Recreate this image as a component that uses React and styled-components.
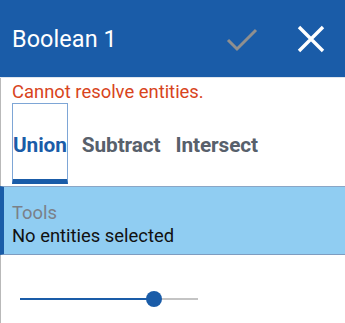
import React from 'react';
import styled, { createGlobalStyle } from 'styled-components';

const GlobalStyle = createGlobalStyle`
  html, body {
    margin: 0;
    padding: 0;
    background: #fff;
  }
  body {
    font-family: Roboto, 'Noto Sans', sans-serif;
  }
`;

const tabs = ['Union', 'Subtract', 'Intersect'];

function App() {
  return (
    <>
      <GlobalStyle />
      <Panel>
        <Header>
          <Title>Boolean 1</Title>
          <HeaderButton aria-label="accept">
            <svg width="34" height="26" viewBox="0 0 34 26">
              <path d="M3 14 L12 23 L31 4" fill="none" stroke="#8f8f8f" strokeWidth="3" />
            </svg>
          </HeaderButton>
          <HeaderButton aria-label="close">
            <svg width="28" height="28" viewBox="0 0 28 28">
              <path d="M2 2 L26 26 M26 2 L2 26" fill="none" stroke="#fff" strokeWidth="3.4" />
            </svg>
          </HeaderButton>
        </Header>
        <Body>
          <ErrorText>Cannot resolve entities.</ErrorText>
          <TabRow>
            {tabs.map((tab, i) => (
              <Tab key={tab} active={i === 0}>
                {tab}
              </Tab>
            ))}
          </TabRow>
          <Selection>
            <SelectionLabel>Tools</SelectionLabel>
            <SelectionValue>No entities selected</SelectionValue>
          </Selection>
          <SliderRow>
            <Track>
              <Fill style={{ width: '75%' }} />
              <Thumb style={{ left: '75%' }} />
            </Track>
          </SliderRow>
        </Body>
      </Panel>
    </>
  );
}

export default App;

const Panel = styled.div`
  width: 345px;
  height: 323px;
  display: flex;
  flex-direction: column;
  overflow: hidden;
`;

const Header = styled.div`
  display: flex;
  align-items: center;
  height: 77px;
  padding: 0 20px 0 12px;
  background: #1a5ca8;
  border-bottom: 1px solid #dfe6ee;
`;

const Title = styled.div`
  flex: 1;
  color: #fff;
  font-size: 23.4px;
  letter-spacing: 0.1px;
`;

const HeaderButton = styled.div`
  display: flex;
  align-items: center;
  justify-content: center;
  margin-left: 38px;
`;

const Body = styled.div`
  flex: 1;
  border-left: 1px solid #b9b9b9;
`;

const ErrorText = styled.div`
  padding: 3px 0 0 11px;
  height: 22px;
  color: #d8441c;
  font-size: 18.4px;
  line-height: 22px;
`;

const TabRow = styled.div`
  display: flex;
  align-items: stretch;
  gap: 13px;
  padding-left: 11px;
  height: 81px;
`;

const Tab = styled.div`
  display: flex;
  align-items: center;
  box-sizing: border-box;
  height: 100%;
  padding-top: 7px;
  font-size: 20.8px;
  font-weight: 700;
  letter-spacing: -0.1px;
  color: ${({ active }) => (active ? '#1a5ca8' : '#58606b')};
  border: ${({ active }) => (active ? '1px solid #7ea6d6' : '1px solid transparent')};
  border-bottom: ${({ active }) => (active ? '5px solid #1a5ca8' : '5px solid transparent')};
`;

const Selection = styled.div`
  margin-top: 2px;
  margin-left: -1px;
  height: 69px;
  padding: 15px 0 0 8px;
  box-sizing: border-box;
  background: #90cdf2;
  border-top: 1px solid #8aa6c6;
  border-bottom: 1px solid #7e9cc0;
  border-left: 4px solid #1a5ca8;
`;

const SelectionLabel = styled.div`
  color: #7b8088;
  font-size: 18.4px;
  line-height: 22px;
`;

const SelectionValue = styled.div`
  margin-top: 1px;
  color: #111;
  font-size: 18.4px;
  line-height: 22px;
`;

const SliderRow = styled.div`
  padding: 43px 0 0 19px;
`;

const Track = styled.div`
  position: relative;
  width: 178px;
  height: 2px;
  background: #c4c4c4;
`;

const Fill = styled.div`
  height: 2px;
  background: #1a5ca8;
`;

const Thumb = styled.div`
  position: absolute;
  top: -7px;
  width: 16px;
  height: 16px;
  margin-left: -8px;
  border-radius: 50%;
  background: #1a5ca8;
`;
